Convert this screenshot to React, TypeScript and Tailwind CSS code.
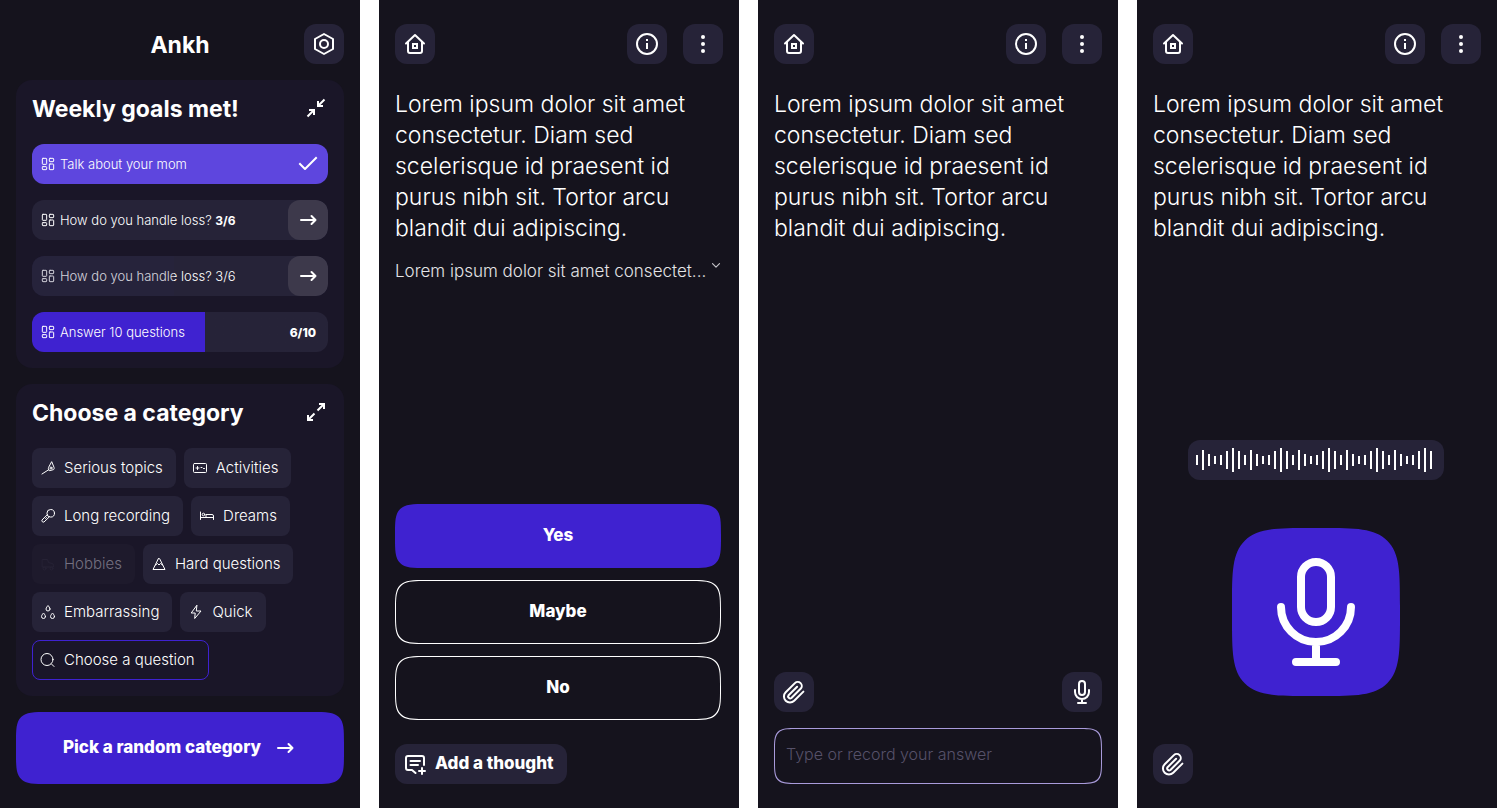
import type { ReactNode } from "react";
import clsx from "clsx";

const PROMPT =
  "Lorem ipsum dolor sit amet consectetur. Diam sed scelerisque id praesent id purus nibh sit. Tortor arcu blandit dui adipiscing.";

type IconProps = { size?: number; stroke?: number; className?: string; children: ReactNode };

function Icon({ size = 24, stroke = 2, className, children }: IconProps) {
  return (
    <svg
      width={size}
      height={size}
      viewBox="0 0 24 24"
      fill="none"
      stroke="currentColor"
      strokeWidth={stroke}
      strokeLinecap="round"
      strokeLinejoin="round"
      className={clsx("shrink-0", className)}
      aria-hidden="true"
    >
      {children}
    </svg>
  );
}

// 16px icons used in the category chips
function ChipIcon({ children }: { children: ReactNode }) {
  return (
    <svg
      width={16}
      height={16}
      viewBox="0 0 16 16"
      fill="none"
      stroke="currentColor"
      strokeLinecap="round"
      strokeLinejoin="round"
      className="shrink-0"
      aria-hidden="true"
    >
      {children}
    </svg>
  );
}

const SettingsIcon = () => (
  <Icon>
    <path d="M12 2 21 7v10l-9 5-9-5V7Z" />
    <circle cx="12" cy="12" r="4" />
  </Icon>
);

const HomeIcon = () => (
  <Icon>
    <path d="m3 11.5 9-8.5 9 8.5" />
    <path d="M5 10v9a2 2 0 0 0 2 2h10a2 2 0 0 0 2-2v-9" />
    <path d="M10 12h4v4h-4z" strokeLinejoin="miter" />
  </Icon>
);

const InfoIcon = () => (
  <Icon>
    <circle cx="12" cy="12" r="10" />
    <path d="M12 11v6M12 7v2" strokeLinecap="butt" />
  </Icon>
);

const DotsIcon = () => (
  <Icon stroke={0}>
    <g fill="currentColor">
      <circle cx="12" cy="5" r="2" />
      <circle cx="12" cy="12" r="2" />
      <circle cx="12" cy="19" r="2" />
    </g>
  </Icon>
);

const ClipIcon = () => (
  <Icon>
    <path d="m21.4 11.6-9.2 9.2a6 6 0 0 1-8.5-8.5l9.2-9.2a4 4 0 0 1 5.7 5.7l-9.2 9.2a2 2 0 0 1-2.8-2.8l8.5-8.5" />
  </Icon>
);

const MicIcon = () => (
  <Icon>
    <rect x="9" y="1" width="6" height="14" rx="3" />
    <path d="M5 10v2a7 7 0 0 0 14 0v-2M12 19v4M8 23h8" />
  </Icon>
);

const ArrowIcon = () => (
  <Icon>
    <path d="M5 12h14.5M15.5 8l4 4-4 4" />
  </Icon>
);

const CheckIcon = () => (
  <Icon>
    <path d="m4 12 5 5L20 6" strokeLinecap="square" />
  </Icon>
);

const CollapseIcon = () => (
  <Icon>
    <path d="m3.5 20.5 6-6M5 14h5v5M20.5 3.5l-6 6M19 10h-5V5" strokeLinecap="butt" strokeLinejoin="miter" />
  </Icon>
);

const ExpandIcon = () => (
  <Icon>
    <path d="m13.5 10.5 6-6M15 4h5v5M10.5 13.5l-6 6M9 20H4v-5" strokeLinecap="butt" strokeLinejoin="miter" />
  </Icon>
);

const CommentPlusIcon = () => (
  <Icon>
    <path d="M21 13V6a2 2 0 0 0-2-2H5a2 2 0 0 0-2 2v10a2 2 0 0 0 2 2h4l3.5 3" />
    <path d="M7.5 9H17M7.5 13H15M19 16v6M16 19h6" />
  </Icon>
);

const TilesIcon = () => (
  <Icon size={16} stroke={1.5}>
    <rect x="3.5" y="3.5" width="6.5" height="9" rx="1" />
    <rect x="14" y="3.5" width="6.5" height="5" rx="1" />
    <rect x="14" y="12" width="6.5" height="8.5" rx="1" />
    <rect x="3.5" y="16" width="6.5" height="4.5" rx="1" />
  </Icon>
);

function SquareButton({ label, children }: { label: string; children: ReactNode }) {
  return (
    <button
      type="button"
      aria-label={label}
      className="flex size-10 items-center justify-center rounded-xl bg-[#262338]"
    >
      {children}
    </button>
  );
}

function Screen({ children }: { children: ReactNode }) {
  return <section className="flex min-h-screen flex-col bg-[#15131d] px-4 py-6 text-white">{children}</section>;
}

function PromptHeader() {
  return (
    <>
      <header className="flex items-center gap-4">
        <SquareButton label="Home">
          <HomeIcon />
        </SquareButton>
        <span className="grow" />
        <SquareButton label="Info">
          <InfoIcon />
        </SquareButton>
        <SquareButton label="More">
          <DotsIcon />
        </SquareButton>
      </header>
      <p className="mt-[25px] max-w-[296px] text-[23px] leading-[31px] font-light">{PROMPT}</p>
    </>
  );
}

function GoalRow({ label, className, children }: { label: ReactNode; className: string; children: ReactNode }) {
  return (
    <li
      className={clsx(
        "relative flex h-10 items-center gap-1 overflow-hidden rounded-xl pl-2 text-[13px] font-light",
        className,
      )}
    >
      <TilesIcon />
      <span className="grow pt-0.5">{label}</span>
      {children}
    </li>
  );
}

function GoButton() {
  return (
    <button
      type="button"
      aria-label="Continue goal"
      className="flex size-10 items-center justify-center rounded-xl bg-[#3d394b]"
    >
      <ArrowIcon />
    </button>
  );
}

const categories: { name: string; disabled?: boolean; icon: ReactNode }[] = [
  {
    name: "Serious topics",
    icon: (
      <>
        <path d="M2 14l7-4.5M11.5 2l-3 5.5c-.4 1 0 2.400.8 3.200l4-1c.9-.3 1-1.200.8-2z" />
        <circle cx="11" cy="8" r="1" />
      </>
    ),
  },
  {
    name: "Activities",
    icon: (
      <>
        <rect x="1.5" y="3.5" width="13" height="9" rx="1" />
        <path d="M4 8h3M5.5 6.500v3M9 7.500h1M11.5 8.500h1" />
      </>
    ),
  },
  {
    name: "Long recording",
    icon: (
      <>
        <circle cx="10.700" cy="5.300" r="3.800" />
        <path d="M7.200 6.700 2 12a1.500 1.500 0 0 0 2 2l5.400-5.200M5.500 10.500l1-1" />
      </>
    ),
  },
  {
    name: "Dreams",
    icon: (
      <>
        <path d="M1.5 4v7.500M1.5 9.500h13M14.5 11.500V8A1.500 1.500 0 0 0 13 6.500H7v3" />
        <circle cx="4.500" cy="6.500" r="1.300" />
      </>
    ),
  },
  {
    name: "Hobbies",
    disabled: true,
    icon: (
      <>
        <path d="M2.5 3.500h5l1 3 3.500 1a2 2 0 0 1 1.500 2v1.500h-11z" />
        <circle cx="4.500" cy="12.500" r="1.500" />
        <circle cx="11.500" cy="12.500" r="1.500" />
      </>
    ),
  },
  {
    name: "Hard questions",
    icon: <path d="M7.300 2.800 2 13.500h12L8.700 2.800a.8.8 0 0 0-1.400 0zM4.500 9l2-1.500L8 9l1.500-1.500 2 1.500" />,
  },
  {
    name: "Embarrassing",
    icon: (
      <>
        <path d="M10 5a2 2 0 0 1-4 0c0-1.300 2-3.500 2-3.500s2 2.200 2 3.500z" />
        <path d="M5.500 12.500a2 2 0 0 1-4 0c0-1.300 2-3.500 2-3.500s2 2.200 2 3.500z" />
        <path d="M14.500 12.500a2 2 0 0 1-4 0c0-1.300 2-3.500 2-3.500s2 2.200 2 3.500z" />
      </>
    ),
  },
  {
    name: "Quick",
    icon: <path d="M8.700 1.500 3.200 9h4l-.5 5.500L13 7H8.700z" />,
  },
];

function HomeScreen() {
  return (
    <Screen>
      <header className="flex items-center">
        <span className="w-10" />
        <h1 className="grow pt-0.5 text-center text-[23px] font-bold">Ankh</h1>
        <SquareButton label="Settings">
          <SettingsIcon />
        </SquareButton>
      </header>

      <section className="mt-4 rounded-2xl bg-[#1a1628] p-4">
        <div className="flex h-6 items-center justify-between">
          <h2 className="pt-0.5 text-[23px] font-bold">Weekly goals met!</h2>
          <button type="button" aria-label="Collapse goals">
            <CollapseIcon />
          </button>
        </div>
        <ul className="mt-6 flex flex-col gap-4">
          <GoalRow label="Talk about your mom" className="bg-[#5e46de] pr-2">
            <CheckIcon />
          </GoalRow>
          <GoalRow
            label={
              <>
                How do you handle loss? <b className="text-xs font-bold">3/6</b>
              </>
            }
            className="bg-[#262338]"
          >
            <GoButton />
          </GoalRow>
          <GoalRow label="How do you handle loss? 3/6" className="bg-[#262338]">
            <span className="absolute inset-y-0 left-0 w-[48%] bg-[#2a2149]/20" />
            <GoButton />
          </GoalRow>
          <GoalRow
            label="Answer 10 questions"
            className="bg-linear-to-r from-[#3f22d0] from-[58.5%] to-[#262338] to-[58.5%] pr-3"
          >
            <b className="pt-0.5 text-xs font-extrabold">6/10</b>
          </GoalRow>
        </ul>
      </section>

      <section className="mt-4 rounded-2xl bg-[#1a1628] p-4">
        <div className="flex h-6 items-center justify-between">
          <h2 className="pt-0.5 text-[23px] font-bold">Choose a category</h2>
          <button type="button" aria-label="Expand categories">
            <ExpandIcon />
          </button>
        </div>
        <div className="mt-6 flex flex-wrap gap-2 text-[15px] font-light">
          {categories.map((c) => (
            <button
              key={c.name}
              type="button"
              disabled={c.disabled}
              className={clsx(
                "flex h-10 items-center gap-2 rounded-lg pr-[13px] pl-2",
                c.disabled ? "bg-[#1e1a2c] text-[#747080]" : "bg-[#262338]",
              )}
            >
              <span className={clsx(c.disabled && "text-[#262235]")}>
                <ChipIcon>{c.icon}</ChipIcon>
              </span>
              {c.name}
            </button>
          ))}
          <button
            type="button"
            className="flex h-10 items-center gap-2 rounded-lg border border-[#3f22d0] pr-[13px] pl-[7px]"
          >
            <ChipIcon>
              <circle cx="7" cy="7.500" r="6" />
              <path d="m11.500 12 2.500 2.500" />
            </ChipIcon>
            Choose a question
          </button>
        </div>
      </section>

      <button
        type="button"
        className="mt-4 flex h-[72px] items-center justify-center gap-3 rounded-[32px] bg-[#3f22d0] text-[17px] font-extrabold [corner-shape:squircle]"
      >
        Pick a random category
        <ArrowIcon />
      </button>
    </Screen>
  );
}

function ChoiceScreen() {
  return (
    <Screen>
      <PromptHeader />
      <button type="button" className="mt-[15px] flex h-6 items-start justify-between text-left font-light">
        <span className="text-[17px] leading-6 whitespace-nowrap text-[#e4e4e6]">
          Lorem ipsum dolor sit amet consectet...
        </span>
        <Icon size={14} className="text-[#c4c3c8]">
          <path d="m6 8 6 6 6-6" />
        </Icon>
      </button>
      <div className="mt-auto mr-0.5 flex flex-col gap-3 text-[17px] font-extrabold">
        <button type="button" className="h-16 rounded-[32px] bg-[#3f22d0] [corner-shape:squircle]">
          Yes
        </button>
        <button type="button" className="h-16 rounded-[32px] border border-white [corner-shape:squircle]">
          Maybe
        </button>
        <button type="button" className="h-16 rounded-[32px] border border-white [corner-shape:squircle]">
          No
        </button>
      </div>
      <button
        type="button"
        className="mt-6 flex h-10 items-center gap-2 self-start rounded-xl bg-[#262338] pr-[13px] pl-2 text-[17px] font-extrabold"
      >
        <CommentPlusIcon />
        Add a thought
      </button>
    </Screen>
  );
}

function TypeScreen() {
  return (
    <Screen>
      <PromptHeader />
      <div className="mt-auto flex justify-between">
        <SquareButton label="Attach a file">
          <ClipIcon />
        </SquareButton>
        <SquareButton label="Record">
          <MicIcon />
        </SquareButton>
      </div>
      <input
        type="text"
        aria-label="Your answer"
        placeholder="Type or record your answer"
        className="mt-4 h-14 w-full rounded-3xl border border-[#a99bdb] bg-transparent px-[11px] pb-1 text-base font-light outline-none placeholder:text-[#565169] [corner-shape:squircle]"
      />
    </Screen>
  );
}

const wave = [10, 20, 12, 8, 10, 18, 24, 18];
const bars = Array.from({ length: 40 }, (_, i) => wave[i % wave.length]);

function RecordScreen() {
  return (
    <Screen>
      <PromptHeader />
      <div className="mt-auto mr-0.5 flex flex-col items-center gap-12">
        <div className="flex h-10 w-64 items-center rounded-xl bg-[#262338] pl-2">
          <svg width="236" height="24" viewBox="0 0 236 24" fill="currentColor" aria-hidden="true">
            {bars.map((h, i) => (
              <rect key={i} x={i * 6} y={12 - h / 2} width="2" height={h} />
            ))}
          </svg>
        </div>
        <button
          type="button"
          aria-label="Start recording"
          className="flex size-[168px] items-center justify-center rounded-[80px] bg-[#3f22d0] [corner-shape:squircle]"
        >
          <svg
            width="78"
            height="108"
            viewBox="0 0 78 108"
            fill="none"
            stroke="currentColor"
            strokeWidth="8"
            strokeLinecap="round"
            aria-hidden="true"
          >
            <rect x="24" y="4" width="30" height="60" rx="15" />
            <path d="M4 49a35 35 0 0 0 70 0M39 84v20M19 104h40" />
          </svg>
        </button>
      </div>
      <div className="mt-12">
        <SquareButton label="Attach a file">
          <ClipIcon />
        </SquareButton>
      </div>
    </Screen>
  );
}

export default function App() {
  return (
    <main className="grid grid-cols-4 gap-[19px] bg-white font-['Inter','Liberation_Sans',sans-serif]">
      <HomeScreen />
      <ChoiceScreen />
      <TypeScreen />
      <RecordScreen />
    </main>
  );
}
